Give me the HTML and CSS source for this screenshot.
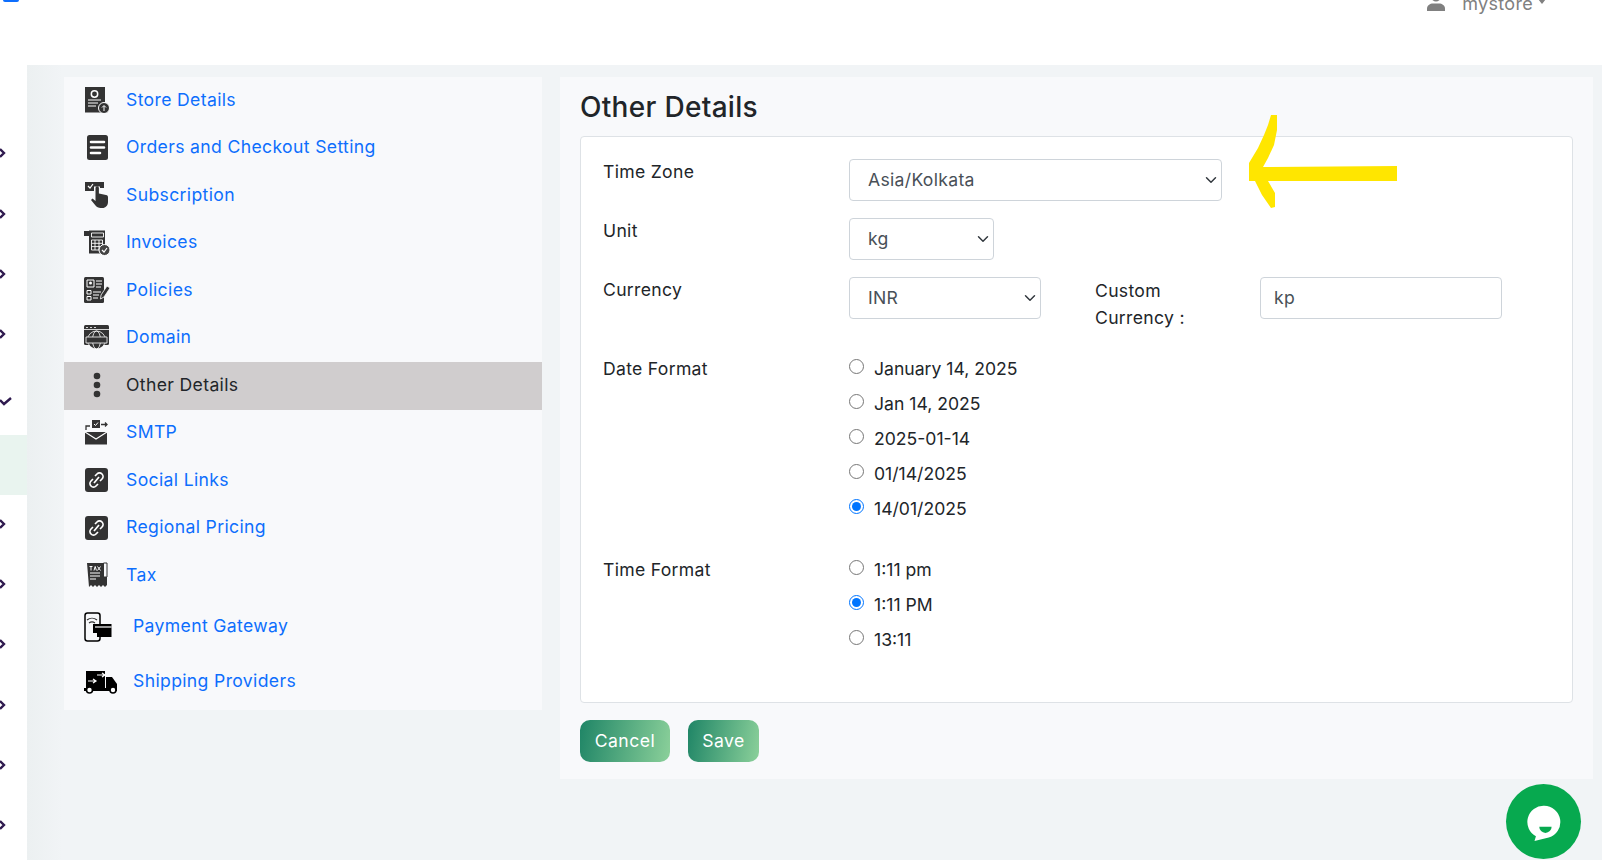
FILE: index.html
```html
<!DOCTYPE html>
<html lang="en">
<head>
  <meta charset="UTF-8">
  <title>Other Details</title>
  <link rel="stylesheet" href="styles.css">
</head>
<body>

  <header class="topbar">
    <span class="logo-mark"></span>
    <div class="user-menu">
      <svg class="user-icon" viewBox="0 0 18 18"><circle cx="9" cy="4" r="4.6"/><path d="M0 18v-2.500c0-3 3-5 6-5h6c3 0 6 2 6 5V18z"/></svg>
      <span>mystore</span>
      <span class="caret"></span>
    </div>
  </header>

  <div class="shell">
    <!-- collapsed left menu, only the arrows show -->
    <aside class="rail">
      <div class="rail-row"><svg viewBox="0 0 6 10"><path d="M0 1l4 4-4 4"/></svg></div>
      <div class="rail-row"><svg viewBox="0 0 6 10"><path d="M0 1l4 4-4 4"/></svg></div>
      <div class="rail-row"><svg viewBox="0 0 6 10"><path d="M0 1l4 4-4 4"/></svg></div>
      <div class="rail-row"><svg viewBox="0 0 6 10"><path d="M0 1l4 4-4 4"/></svg></div>
      <div class="rail-row rail-open"><svg class="rail-check" viewBox="0 0 12 10"><path d="M0 3l4 4 7-6"/></svg></div>
      <div class="rail-row rail-current"></div>
      <div class="rail-row rail-after"><svg viewBox="0 0 6 10"><path d="M0 1l4 4-4 4"/></svg></div>
      <div class="rail-row"><svg viewBox="0 0 6 10"><path d="M0 1l4 4-4 4"/></svg></div>
      <div class="rail-row"><svg viewBox="0 0 6 10"><path d="M0 1l4 4-4 4"/></svg></div>
      <div class="rail-row"><svg viewBox="0 0 6 10"><path d="M0 1l4 4-4 4"/></svg></div>
      <div class="rail-row"><svg viewBox="0 0 6 10"><path d="M0 1l4 4-4 4"/></svg></div>
      <div class="rail-row"><svg viewBox="0 0 6 10"><path d="M0 1l4 4-4 4"/></svg></div>
    </aside>

    <main class="main">
      <nav class="side-nav">
        <a class="nav-item" href="#">
          <svg class="nav-icon" viewBox="0 0 26 26"><rect x="1" y="0" width="20" height="25.500" fill="#333"/><circle cx="10.500" cy="7" r="3.200" fill="none" stroke="#fff" stroke-width="1.500"/><path d="M4 13h13M4 16h10M4 19h8" stroke="#fff"/><circle cx="20" cy="21" r="5.500" fill="#333" stroke="#fff"/><path d="M20 24v-5M18 20.500l2-2 2 2" stroke="#fff" fill="none"/></svg>
          <span>Store Details</span>
        </a>
        <a class="nav-item" href="#">
          <svg class="nav-icon" viewBox="0 0 26 26"><rect x="3" y="0" width="21" height="25" rx="2.500" fill="#333"/><path d="M7 7h13M7 12.500h13M7 18h9" stroke="#fff" stroke-width="2.600" stroke-linecap="round"/></svg>
          <span>Orders and Checkout Setting</span>
        </a>
        <a class="nav-item" href="#">
          <svg class="nav-icon" viewBox="0 0 26 26"><path d="M1 0h19v6h-4V4.500h-6V9H1z" fill="#333"/><path d="M4 4l2 2 3-4" stroke="#fff" stroke-width="1.200" fill="none"/><path d="M11.500 6a1.700 1.700 0 0 1 3.400 0v5.500l7.100 1.500c1.500.3 2 1 2 2.500V20c0 3.500-2.500 6-5.500 6h-2c-2 0-4-1-5-2.500L7 18l1.500-1.500 3 2.500z" fill="#333"/></svg>
          <span>Subscription</span>
        </a>
        <a class="nav-item" href="#">
          <svg class="nav-icon" viewBox="0 0 26 26"><path d="M0 1h5v5H0z" fill="#333"/><path d="M5 .5h16v23H5z" fill="#333"/><path d="M7.500 3h12v4h-12zM7.500 10h11v10h-11zM11 10v10M15 10v10M7.500 13.300h11M7.500 16.600h11" fill="none" stroke="#fff" stroke-width=".9"/><circle cx="20.500" cy="20" r="5.500" fill="#444" stroke="#fff"/><path d="M18 20l2 2 3-4" fill="none" stroke="#fff" stroke-width="1.200"/></svg>
          <span>Invoices</span>
        </a>
        <a class="nav-item" href="#">
          <svg class="nav-icon" viewBox="0 0 26 26"><rect x="0" y="0" width="20" height="26" rx="1.500" fill="#333"/><path d="M3 3h7v7H3zM3 13.500h4v3.500H3zM3 19.500h4V23H3z" fill="none" stroke="#fff"/><circle cx="6.500" cy="6" r="1.500" fill="#fff"/><path d="M12 4h6M12 7h6M12 10h5M9 15h8M9 18h6M9 21h5" stroke="#fff"/><path d="M23 9l3 2-6 9-3.500 2 .5-4z" fill="#333" stroke="#fff" stroke-width=".8"/></svg>
          <span>Policies</span>
        </a>
        <a class="nav-item" href="#">
          <svg class="nav-icon" viewBox="0 0 26 26"><rect x="0" y="0" width="25" height="20" rx="1.500" fill="#333"/><path d="M2 2.500h2M6 2.500h2M10 2.500h2M0 4.500h25" stroke="#fff" stroke-width=".8"/><circle cx="12.500" cy="15" r="9" fill="#333" stroke="#fff" stroke-width=".8"/><ellipse cx="12.500" cy="15" rx="4" ry="9" fill="none" stroke="#fff" stroke-width=".8"/><path d="M2 12h21v6H2z" fill="#333" stroke="#fff" stroke-width=".8"/></svg>
          <span>Domain</span>
        </a>
        <a class="nav-item active" href="#">
          <svg class="nav-icon" viewBox="0 0 26 26"><circle cx="13" cy="4" r="3.300" fill="#333"/><circle cx="13" cy="13" r="3.300" fill="#333"/><circle cx="13" cy="22" r="3.300" fill="#333"/></svg>
          <span>Other Details</span>
        </a>
        <a class="nav-item" href="#">
          <svg class="nav-icon" viewBox="0 0 26 26"><path d="M1 12h22v12.500H1z" fill="#333"/><path d="M1 12l11 7 11-7" fill="none" stroke="#fff" stroke-width="1.100"/><path d="M2 10V6h4" fill="none" stroke="#333" stroke-width="1.300"/><rect x="8" y="0" width="8" height="8" fill="#333"/><path d="M10 4l1.500 1.500L14 2.500" fill="none" stroke="#fff"/><path d="M17 4.500h6M21 2.500l2 2-2 2" fill="none" stroke="#333" stroke-width="1.300"/></svg>
          <span>SMTP</span>
        </a>
        <a class="nav-item" href="#">
          <svg class="nav-icon" viewBox="0 0 26 26"><rect x="1" y="1" width="23" height="24" rx="3" fill="#333"/><path d="M11 9l2-2a3.500 3.500 0 0 1 5 5l-2 2M14 17l-2 2a3.500 3.500 0 0 1-5-5l2-2M10 16l5-6" fill="none" stroke="#fff" stroke-width="1.700"/></svg>
          <span>Social Links</span>
        </a>
        <a class="nav-item" href="#">
          <svg class="nav-icon" viewBox="0 0 26 26"><rect x="1" y="1" width="23" height="24" rx="3" fill="#333"/><path d="M11 9l2-2a3.500 3.500 0 0 1 5 5l-2 2M14 17l-2 2a3.500 3.500 0 0 1-5-5l2-2M10 16l5-6" fill="none" stroke="#fff" stroke-width="1.700"/></svg>
          <span>Regional Pricing</span>
        </a>
        <a class="nav-item" href="#">
          <svg class="nav-icon" viewBox="0 0 26 26"><path d="M3 1h20v22l-2 2-2-2-2 2-2-2-2 2-2-2-2 2-2-2-2 2z" fill="#333"/><path d="M19.500 1h3.500v14h-3.500z" fill="#f8f9fb" stroke="#333"/><path d="M6 11h10M6 14h10M6 17h6" stroke="#fff" stroke-width="1.100"/><path d="M5.500 4.500h3M7 4.500v4M10 8.500l1.200-4 1.200 4M13.500 4.500l3 4M16.500 4.500l-3 4" stroke="#fff" fill="none"/></svg>
          <span>Tax</span>
        </a>
        <a class="nav-item nav-pay" href="#">
          <svg class="nav-icon nav-icon-pay" viewBox="0 0 28 30"><rect x="1" y="1" width="15" height="28" rx="2.500" fill="none" stroke="#000" stroke-width="1.500"/><path d="M3 8a8 8 0 0 1 10 0M5 11a5 5 0 0 1 6 0" fill="none" stroke="#333" stroke-width="1.200"/><path d="M9 12h18.500v13H13v-4H9z" fill="#000"/><path d="M11 15h16.500" stroke="#fff" stroke-width="1.200"/></svg>
          <span>Payment Gateway</span>
        </a>
        <a class="nav-item nav-ship" href="#">
          <svg class="nav-icon nav-icon-ship" viewBox="0 0 34 24"><path d="M2 1h19v18H2z" fill="#000"/><path d="M13 5h8M18 3l3 2-3 2M4 11h8M9 9l3 2-3 2" fill="none" stroke="#fff" stroke-width="1.200"/><path d="M22 7h6l5 7v6H22z" fill="#000"/><path d="M0 18h33v3H0z" fill="#000"/><circle cx="5.500" cy="20" r="3" fill="#fff" stroke="#000" stroke-width="1.600"/><circle cx="29" cy="20" r="3" fill="#fff" stroke="#000" stroke-width="1.600"/></svg>
          <span>Shipping Providers</span>
        </a>
      </nav>

      <section class="panel">
        <h2>Other Details</h2>
        <form class="card">
          <div class="field-row">
            <label>Time Zone</label>
            <select class="form-select zone-select"><option>Asia/Kolkata</option></select>
          </div>
          <div class="field-row">
            <label>Unit</label>
            <select class="form-select unit-select"><option>kg</option></select>
          </div>
          <div class="field-row currency-row">
            <label>Currency</label>
            <select class="form-select currency-select"><option>INR</option></select>
            <label class="custom-label">Custom Currency :</label>
            <input class="form-input" type="text" value="kp">
          </div>
          <div class="radio-row">
            <label>Date Format</label>
            <div class="radio-list">
              <label class="radio-item"><input type="radio" name="date"><span>January 14, 2025</span></label>
              <label class="radio-item"><input type="radio" name="date"><span>Jan 14, 2025</span></label>
              <label class="radio-item"><input type="radio" name="date"><span>2025-01-14</span></label>
              <label class="radio-item"><input type="radio" name="date"><span>01/14/2025</span></label>
              <label class="radio-item"><input type="radio" name="date" checked><span>14/01/2025</span></label>
            </div>
          </div>
          <div class="radio-row">
            <label>Time Format</label>
            <div class="radio-list">
              <label class="radio-item"><input type="radio" name="time"><span>1:11 pm</span></label>
              <label class="radio-item"><input type="radio" name="time" checked><span>1:11 PM</span></label>
              <label class="radio-item"><input type="radio" name="time"><span>13:11</span></label>
            </div>
          </div>
        </form>
        <div class="actions">
          <button class="btn btn-cancel" type="button">Cancel</button>
          <button class="btn btn-save" type="button">Save</button>
        </div>
      </section>
    </main>
  </div>

  <!-- yellow marker drawn over the screenshot -->
  <svg class="marker" viewBox="0 0 160 100"><path d="M31 0h6v15l-3 15-6 13-5 9 134-1v15H28l7 12v14l-4 1-9-13-7-14H9V48l9-15 6-13 4-10z"/></svg>

  <a class="chat-btn" href="#">
    <svg viewBox="0 0 40 40"><path d="M20 3a17 17 0 0 1 5 33.300L10 40l1.500-5A17 17 0 0 1 20 3z" fill="#fff"/><path d="M15 25h13a6.500 6.500 0 0 1-13 0z" fill="#07a94f"/></svg>
  </a>

</body>
</html>
```

FILE: styles.css
```css
body {
  font-family: Inter, "Open Sans", sans-serif;
  font-size: 17.600px;
  letter-spacing: .3px;
  color: #212529;
  margin: 0;
  height: 860px;
  overflow: hidden;
  position: relative;
  background-color: #fff;
}

a {
  text-decoration: none;
}

/* Top bar */
.topbar {
  height: 65px;
  display: flex;
  justify-content: space-between;
  align-items: flex-start;
  padding: 0 56px 0 3px;
  background-color: #fff;
}

.logo-mark {
  width: 16px;
  height: 2px;
  border-radius: 0 0 2px 2px;
  background-color: #0d6efd;
}

.user-menu {
  display: flex;
  align-items: center;
  margin-top: -7px;
  height: 20px;
  font-size: 18px;
  color: #808080;
}

.user-icon {
  width: 18px;
  height: 18px;
  fill: #808080;
  margin-right: 17px;
  margin-bottom: 2px;
}

.caret {
  margin-left: 5px;
  margin-bottom: 3px;
  border-top: 5px solid #808080;
  border-left: 4.500px solid transparent;
  border-right: 4.500px solid transparent;
}

/* Page body */
.shell {
  display: flex;
  height: 795px;
}

.rail {
  width: 27px;
  padding-top: 58px;
  box-sizing: border-box;
  flex-shrink: 0;
  background-color: #fff;
}

.rail-row {
  height: 60.400px;
  display: flex;
  align-items: center;
}

.rail-row svg {
  width: 6px;
  height: 10px;
  fill: none;
  stroke: #2f1a4f;
  stroke-width: 2.400;
}

.rail-open {
  margin-top: 7px;
}

.rail-current {
  margin-top: 3px;
  background-color: #e9f4ef;
}

.rail-after {
  margin-top: -2px;
}

.rail-row .rail-check {
  width: 12px;
}

.main {
  flex: 1;
  display: flex;
  align-items: flex-start;
  gap: 18px;
  padding: 12px 9px 0 37px;
  background: linear-gradient(90deg, #ecf0f1 0, #f1f4f6 35px);
}

/* Side menu */
.side-nav {
  width: 478px;
  flex-shrink: 0;
  background-color: #f8f9fb;
}

.nav-item {
  display: flex;
  align-items: center;
  gap: 16px;
  height: 47.500px;
  box-sizing: border-box;
  padding: 0 0 1px 20px;
  letter-spacing: .35px;
  color: #0d6efd;
}

.nav-item span {
  margin-bottom: 2px;
}

.nav-item.active {
  color: #212529;
  background-color: #d0cdce;
}

.nav-pay {
  height: 54px;
  gap: 21px;
  padding-bottom: 0;
}

.nav-ship {
  height: 56px;
  gap: 15px;
  padding-bottom: 0;
}

.nav-icon {
  width: 26px;
  height: 26px;
  flex-shrink: 0;
}

.nav-icon-pay {
  width: 28px;
  height: 30px;
}

.nav-icon-ship {
  width: 34px;
  height: 24px;
}

/* Form panel */
.panel {
  flex: 1;
  height: 702px;
  box-sizing: border-box;
  padding: 0 20px;
  background-color: #f8f9fb;
}

h2 {
  font-size: 28px;
  font-weight: 500;
  line-height: 57px;
  padding-top: 2px;
  margin: 0;
  color: #212529;
}

.card {
  height: 567px;
  box-sizing: border-box;
  padding: 22px 22px;
  background-color: #fff;
  border: 1px solid #dee2e6;
  border-radius: 4px;
}

.field-row {
  display: flex;
  margin-bottom: 17px;
}

.field-row > label,
.radio-row > label {
  width: 246px;
  flex-shrink: 0;
  line-height: 26px;
}

.form-select,
.form-input {
  height: 42px;
  box-sizing: border-box;
  font: inherit;
  letter-spacing: inherit;
  color: #495057;
  background-color: #fff;
  border: 1px solid #ced4da;
  border-radius: 4px;
  padding: 0 16px 2px 18px;
}

.form-select {
  appearance: none;
  background-image: url("data:image/svg+xml,%3csvg xmlns='http://www.w3.org/2000/svg' viewBox='0 0 16 16'%3e%3cpath fill='none' stroke='%23343a40' stroke-linecap='round' stroke-linejoin='round' stroke-width='2' d='M2 5l6 6 6-6'/%3e%3c/svg%3e");
  background-repeat: no-repeat;
  background-position: right 2px center;
  background-size: 16px 12px;
}

.zone-select {
  width: 373px;
}

.unit-select {
  width: 145px;
}

.currency-select {
  width: 192px;
}

.currency-row {
  margin-bottom: 25px;
}

.currency-row > .custom-label {
  width: 110px;
  margin-left: 54px;
  line-height: 27px;
}

.form-input {
  width: 242px;
  margin-left: 55px;
  padding-left: 13px;
}

.radio-row {
  display: flex;
  margin-bottom: 36px;
}

.radio-list {
  display: flex;
  flex-direction: column;
  gap: 9px;
  margin-top: -1px;
  letter-spacing: 0;
}

.radio-item {
  display: flex;
  align-items: center;
  height: 26px;
  gap: 10px;
}

.radio-item input {
  width: 15px;
  height: 15px;
  margin: 0 0 4px 0;
}

/* Buttons */
.actions {
  display: flex;
  gap: 18px;
  margin-top: 17px;
}

.btn {
  height: 42px;
  border: none;
  border-radius: 10px;
  padding: 0 0 2px;
  font: inherit;
  letter-spacing: .5px;
  color: #fff;
  background: linear-gradient(100deg, #1f8566 0, #8bd09a 100%);
  cursor: pointer;
}

.btn-cancel {
  width: 90px;
}

.btn-save {
  width: 71px;
}

/* Overlays */
.marker {
  position: absolute;
  left: 1240px;
  top: 115px;
  width: 160px;
  height: 100px;
  fill: #ffe600;
}

.chat-btn {
  position: absolute;
  left: 1506px;
  top: 784px;
  width: 75px;
  height: 75px;
  display: flex;
  align-items: center;
  justify-content: center;
  border-radius: 50%;
  background-color: #07a94f;
}

.chat-btn svg {
  width: 38px;
  height: 38px;
}
```
